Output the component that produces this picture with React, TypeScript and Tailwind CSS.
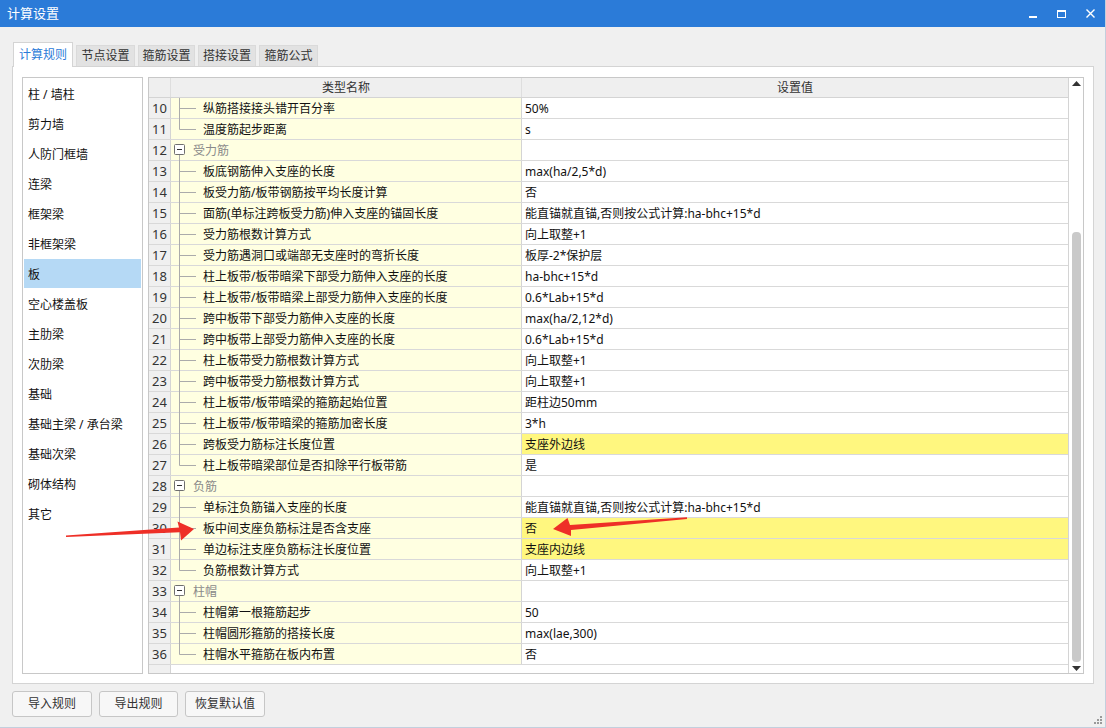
import React from 'react';

type Kind = 'group' | 'mid' | 'last';
type Row = { n: number; kind: Kind; name: string; value?: string; hl?: boolean };

const rows: Row[] = [
  { n: 10, kind: 'mid', name: '纵筋搭接接头错开百分率', value: '50%' },
  { n: 11, kind: 'last', name: '温度筋起步距离', value: 's' },
  { n: 12, kind: 'group', name: '受力筋' },
  { n: 13, kind: 'mid', name: '板底钢筋伸入支座的长度', value: 'max(ha/2,5*d)' },
  { n: 14, kind: 'mid', name: '板受力筋/板带钢筋按平均长度计算', value: '否' },
  { n: 15, kind: 'mid', name: '面筋(单标注跨板受力筋)伸入支座的锚固长度', value: '能直锚就直锚,否则按公式计算:ha-bhc+15*d' },
  { n: 16, kind: 'mid', name: '受力筋根数计算方式', value: '向上取整+1' },
  { n: 17, kind: 'mid', name: '受力筋遇洞口或端部无支座时的弯折长度', value: '板厚-2*保护层' },
  { n: 18, kind: 'mid', name: '柱上板带/板带暗梁下部受力筋伸入支座的长度', value: 'ha-bhc+15*d' },
  { n: 19, kind: 'mid', name: '柱上板带/板带暗梁上部受力筋伸入支座的长度', value: '0.6*Lab+15*d' },
  { n: 20, kind: 'mid', name: '跨中板带下部受力筋伸入支座的长度', value: 'max(ha/2,12*d)' },
  { n: 21, kind: 'mid', name: '跨中板带上部受力筋伸入支座的长度', value: '0.6*Lab+15*d' },
  { n: 22, kind: 'mid', name: '柱上板带受力筋根数计算方式', value: '向上取整+1' },
  { n: 23, kind: 'mid', name: '跨中板带受力筋根数计算方式', value: '向上取整+1' },
  { n: 24, kind: 'mid', name: '柱上板带/板带暗梁的箍筋起始位置', value: '距柱边50mm' },
  { n: 25, kind: 'mid', name: '柱上板带/板带暗梁的箍筋加密长度', value: '3*h' },
  { n: 26, kind: 'mid', name: '跨板受力筋标注长度位置', value: '支座外边线', hl: true },
  { n: 27, kind: 'last', name: '柱上板带暗梁部位是否扣除平行板带筋', value: '是' },
  { n: 28, kind: 'group', name: '负筋' },
  { n: 29, kind: 'mid', name: '单标注负筋锚入支座的长度', value: '能直锚就直锚,否则按公式计算:ha-bhc+15*d' },
  { n: 30, kind: 'mid', name: '板中间支座负筋标注是否含支座', value: '否', hl: true },
  { n: 31, kind: 'mid', name: '单边标注支座负筋标注长度位置', value: '支座内边线', hl: true },
  { n: 32, kind: 'last', name: '负筋根数计算方式', value: '向上取整+1' },
  { n: 33, kind: 'group', name: '柱帽' },
  { n: 34, kind: 'mid', name: '柱帽第一根箍筋起步', value: '50' },
  { n: 35, kind: 'mid', name: '柱帽圆形箍筋的搭接长度', value: 'max(lae,300)' },
  { n: 36, kind: 'last', name: '柱帽水平箍筋在板内布置', value: '否' },
];

const sideItems = [
  '柱 / 墙柱',
  '剪力墙',
  '人防门框墙',
  '连梁',
  '框架梁',
  '非框架梁',
  '板',
  '空心楼盖板',
  '主肋梁',
  '次肋梁',
  '基础',
  '基础主梁 / 承台梁',
  '基础次梁',
  '砌体结构',
  '其它',
];

const tabs = [
  { label: '计算规则', w: 'w-[60px]' },
  { label: '节点设置', w: 'w-[59px]' },
  { label: '箍筋设置', w: 'w-[57px]' },
  { label: '搭接设置', w: 'w-[58px]' },
  { label: '箍筋公式', w: 'w-[59px]' },
];

const LINE = '#ababab';

function Tree({ kind }: { kind: Kind }) {
  if (kind === 'group') {
    return (
      <svg width="22" height="20" className="shrink-0 overflow-visible">
        <rect x="3.5" y="4.5" width="10" height="10" fill="white" stroke="#6f6f6f" rx="1" />
        <line x1="6" y1="9.5" x2="11" y2="9.5" stroke="#333" />
        <line x1="8.5" y1="15" x2="8.5" y2="21" stroke={LINE} />
      </svg>
    );
  }
  return (
    <svg width="32" height="20" className="shrink-0 overflow-visible">
      <line x1="8.5" y1="0" x2="8.5" y2={kind === 'mid' ? 21 : 10.5} stroke={LINE} />
      <line x1="8.5" y1="10.5" x2="25" y2="10.5" stroke={LINE} />
    </svg>
  );
}

function TableRow({ r }: { r: Row }) {
  return (
    <div className="flex h-[21px] border-b border-[#d9d9d9]">
      <div className="w-[22px] h-[20px] shrink-0 bg-[#f0f0f0] border-r border-[#d4d4d4] text-center text-[13px] leading-[21px] text-[#333]">
        {r.n}
      </div>
      <div className="w-[351px] shrink-0 bg-[#ffffe1] border-r border-[#d4d4d4] flex items-center">
        <Tree kind={r.kind} />
        <span className={r.kind === 'group' ? 'pt-px text-[#8a8a8a] whitespace-nowrap' : 'pt-px text-[#111] whitespace-nowrap'}>
          {r.name}
        </span>
      </div>
      <div
        className={
          r.hl
            ? 'flex-1 h-[20px] bg-[#fff77f] pl-[3px] leading-[21px] text-[#111] whitespace-nowrap'
            : 'flex-1 h-[20px] bg-white pl-[3px] leading-[21px] text-[#111] whitespace-nowrap'
        }
      >
        {r.value ?? ''}
      </div>
    </div>
  );
}

export default function App() {
  return (
    <div className="relative w-[1106px] h-[728px] bg-[#f0f0f0] flex flex-col overflow-hidden border-r border-b border-[#c3cfdd] font-['Noto_Sans','Noto_Sans_CJK_SC',sans-serif] text-[12px]">
      {/* title bar */}
      <div className="h-[27px] shrink-0 bg-[#2b7bd8] flex items-center pl-[7px] pr-[10px] text-white">
        <span className="text-[13px]">计算设置</span>
        <div className="ml-auto flex items-center gap-[20px]">
          <svg width="8" height="8" viewBox="0 0 8 8">
            <rect x="0" y="6" width="8" height="2" fill="white" />
          </svg>
          <svg width="9" height="8" viewBox="0 0 9 8">
            <rect x="0.5" y="0.5" width="8" height="7" fill="none" stroke="white" />
            <rect x="0.5" y="0.5" width="8" height="1.5" fill="white" />
          </svg>
          <svg width="9" height="9" viewBox="0 0 9 9">
            <path d="M0.5 0.5 L8.5 8.5 M8.5 0.5 L0.5 8.5" stroke="white" strokeWidth="1.4" />
          </svg>
        </div>
      </div>

      {/* tabs */}
      <div className="mt-[15px] ml-[13px] flex items-end gap-[3px] h-[25px] relative z-10">
        {tabs.map((t, i) =>
          i === 0 ? (
            <div
              key={t.label}
              className={`${t.w} h-[25px] bg-white border border-b-0 border-[#d4d4d4] flex items-center justify-center text-[#2b7bd8] text-[12px]`}
            >
              {t.label}
            </div>
          ) : (
            <div
              key={t.label}
              className={`${t.w} h-[21px] mb-px bg-[#e2e2e2] border border-b-0 border-[#dadada] flex items-center justify-center text-[#333] text-[12px]`}
            >
              {t.label}
            </div>
          )
        )}
      </div>

      {/* panel */}
      <div className="-mt-px ml-[12px] w-[1082px] h-[618px] bg-white border border-[#d4d4d4] pt-[10px] pl-[9px] pr-[9px] pb-[8px] flex gap-[5px]">
        {/* sidebar */}
        <div className="w-[121px] h-[597px] shrink-0 border border-[#c8c8c8] bg-white p-px flex flex-col gap-px">
          {sideItems.map((s) => (
            <div
              key={s}
              className={
                s === '板'
                  ? 'h-[29px] shrink-0 flex items-center pl-[4px] pt-[3px] bg-[#b5d9f5] text-[#111]'
                  : 'h-[29px] shrink-0 flex items-center pl-[4px] pt-[3px] text-[#111]'
              }
            >
              {s}
            </div>
          ))}
        </div>

        {/* table */}
        <div className="w-[936px] h-[597px] shrink-0 border border-[#c8c8c8] flex bg-white">
          <div className="w-[919px] flex flex-col">
            {/* header */}
            <div className="h-[20px] shrink-0 flex bg-[#efefef] border-b border-[#d4d4d4] text-[#333]">
              <div className="w-[22px] shrink-0 border-r border-[#dedede]" />
              <div className="w-[351px] shrink-0 border-r border-[#dedede] flex items-center justify-center pt-px">类型名称</div>
              <div className="flex-1 flex items-center justify-center pt-px">设置值</div>
            </div>
            {rows.map((r) => (
              <TableRow key={r.n} r={r} />
            ))}
            <div className="flex-1 flex">
              <div className="w-[22px] shrink-0 bg-[#f0f0f0] border-r border-[#d4d4d4]" />
              <div className="flex-1 bg-white" />
            </div>
          </div>
          {/* scrollbar */}
          <div className="w-[15px] shrink-0 border-l border-[#d4d4d4] bg-white flex flex-col items-center">
            <svg width="9" height="5" viewBox="0 0 9 5" className="mt-[3px]">
              <path d="M0 5 L4.5 0 L9 5 Z" fill="#333" />
            </svg>
            <div className="mt-[146px] w-[9px] h-[430px] rounded-[4px] bg-[#c9c9c9]" />
            <svg width="9" height="5" viewBox="0 0 9 5" className="mt-[4px]">
              <path d="M0 0 L9 0 L4.5 5 Z" fill="#333" />
            </svg>
          </div>
        </div>
      </div>

      {/* bottom buttons */}
      <div className="mt-[7px] ml-[12px] flex gap-[7px]">
        <button className="w-[80px] h-[26px] rounded-[3px] border border-[#c6c6c6] bg-[#f7f7f7] text-[#333] text-[12px]">导入规则</button>
        <button className="w-[79px] h-[26px] rounded-[3px] border border-[#c6c6c6] bg-[#f7f7f7] text-[#333] text-[12px]">导出规则</button>
        <button className="w-[80px] h-[26px] rounded-[3px] border border-[#c6c6c6] bg-[#f7f7f7] text-[#333] text-[12px]">恢复默认值</button>
      </div>

      {/* resize grip */}
      <svg width="9" height="9" viewBox="0 0 9 9" className="absolute right-[2px] bottom-[2px]">
        <rect x="6" y="0" width="2" height="2" fill="#9a9a9a" />
        <rect x="3" y="3" width="2" height="2" fill="#9a9a9a" />
        <rect x="6" y="3" width="2" height="2" fill="#9a9a9a" />
        <rect x="0" y="6" width="2" height="2" fill="#9a9a9a" />
        <rect x="3" y="6" width="2" height="2" fill="#9a9a9a" />
        <rect x="6" y="6" width="2" height="2" fill="#9a9a9a" />
      </svg>

      {/* annotation arrows */}
      <svg
        width="1106"
        height="728"
        viewBox="0 0 1106 728"
        className="absolute left-0 top-0 pointer-events-none"
      >
        <polygon points="66,535.6 179,527.6 177.5,521.5 194,529 181,540.5 180,532.3 66,537" fill="#ee2f27" />
        <polygon points="687,517.3 570,525 567.5,518 553,529 571,536 571,530 687,519" fill="#ee2f27" />
      </svg>
    </div>
  );
}
